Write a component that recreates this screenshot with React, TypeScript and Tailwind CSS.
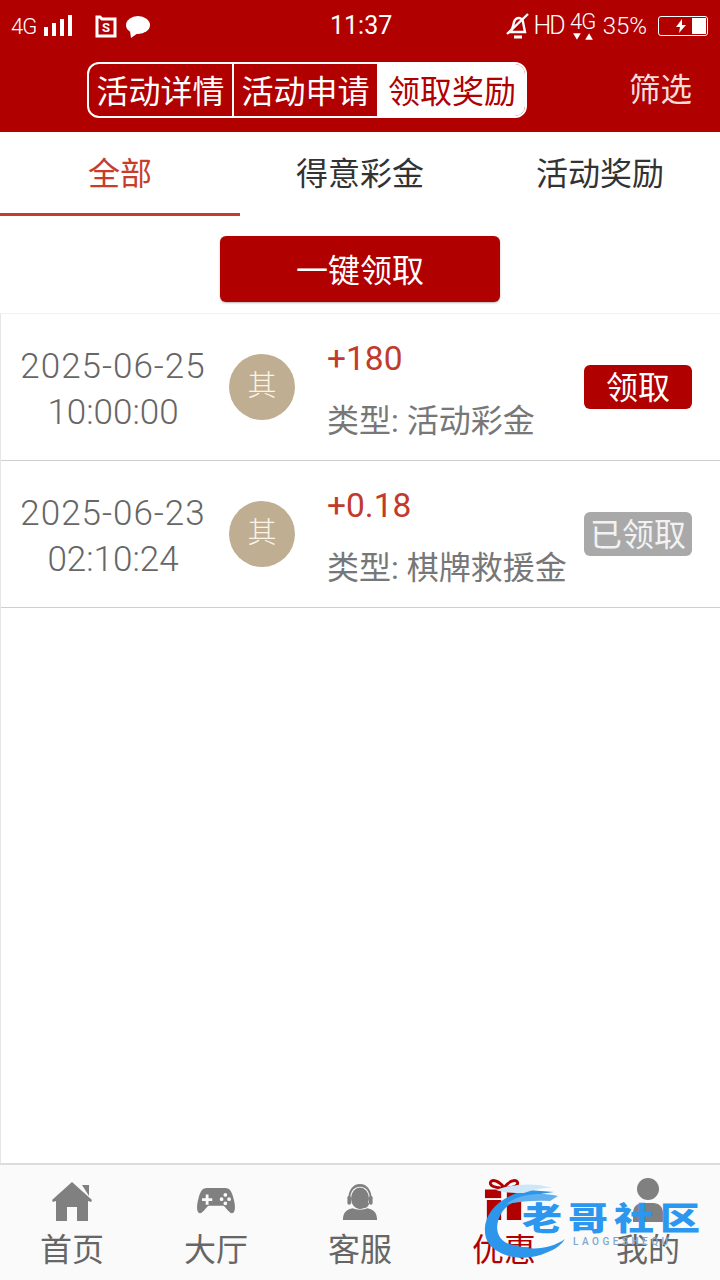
const records = [
  { date: '2025-06-25', time: '10:00:00', amount: '+180', type: '类型: 活动彩金', claimed: false },
  { date: '2025-06-23', time: '02:10:24', amount: '+0.18', type: '类型: 棋牌救援金', claimed: true },
]

function StatusBar() {
  return (
    <div className="relative flex h-[52px] items-center justify-between pl-[11px] pr-[12px] text-white">
      <div className="flex items-center">
        <span className="text-[22px] font-light tracking-[-1px]">4G</span>
        <svg width="30" height="24" viewBox="0 0 30 24" className="ml-[7px]" fill="#fff">
          <rect x="1" y="13" width="4" height="9" />
          <rect x="9" y="9" width="4" height="13" />
          <rect x="17" y="5" width="4" height="17" />
          <rect x="25" y="1" width="4" height="21" />
        </svg>
        <svg width="22" height="24" viewBox="0 0 22 24" className="ml-[22px]">
          <path d="M2 3h3l2 2h13v17H2z" fill="none" stroke="#fff" strokeWidth="3" />
          <text x="11" y="18" fontSize="13" fontWeight="700" textAnchor="middle" fill="#fff">S</text>
        </svg>
        <svg width="26" height="24" viewBox="0 0 26 24" className="ml-[8px]" fill="#fff">
          <ellipse cx="13" cy="11" rx="12" ry="9" />
          <path d="M5 17l1 7 7-5z" />
        </svg>
      </div>
      <span className="absolute left-[330px] text-[25px]">11:37</span>
      <div className="flex items-center">
        <svg width="26" height="28" viewBox="0 0 26 28" fill="none" stroke="#fff" strokeWidth="2.4">
          <path d="M5 20c3-3 3-6 4-10 1-3 3-4 5-4s4 2 4 4l2 10z" />
          <path d="M2 22L23 2" />
          <path d="M9 25h8" strokeWidth="3" />
        </svg>
        <span className="ml-[3px] text-[25px] font-light tracking-[-2px]">HD</span>
        <div className="ml-[6px] flex w-[26px] flex-col items-center leading-none">
          <span className="text-[22px] font-light leading-[20px] tracking-[-1px]">4G</span>
          <svg width="22" height="9" viewBox="0 0 20 8" fill="#fff">
            <path d="M1 1h7L4.500 7zM12 7h7l-3.500-6z" />
          </svg>
        </div>
        <span className="ml-[7px] text-[24px] font-light">35%</span>
        <div className="ml-[11px] flex h-[20px] w-[50px] items-center justify-end rounded-[3px] border border-white pr-px">
          <svg width="12" height="14" viewBox="0 0 12 14" fill="#fff" className="mr-[5px]">
            <path d="M7 0L1 8h4l-1 6 7-8H7z" />
          </svg>
          <div className="h-[16px] w-[14px] bg-white" />
        </div>
      </div>
    </div>
  )
}

function Header() {
  return (
    <div className="flex h-[80px] items-start pt-[10px]">
      <div className="ml-[87px] flex h-[56px] w-[440px] overflow-hidden rounded-[12px] border-2 border-white text-[32px] font-normal leading-[56px]">
        <span className="w-[145px] border-r-2 border-white text-center text-white">活动详情</span>
        <span className="w-[145px] border-r-2 border-white text-center text-white">活动申请</span>
        <span className="flex-1 bg-white text-center text-[#b00000]">领取奖励</span>
      </div>
      <span className="ml-[102px] text-[31.500px] font-normal leading-[58px] text-[#f5dcdc]">筛选</span>
    </div>
  )
}

function Tabs() {
  return (
    <div className="flex h-[84px] text-[32px] font-normal">
      <div className="flex w-[240px] items-center justify-center border-b-[3px] border-[#c83c2c] pt-[3px] text-[#c83c2c]">全部</div>
      <div className="flex w-[240px] items-center justify-center text-[#333]">得意彩金</div>
      <div className="flex w-[240px] items-center justify-center text-[#333]">活动奖励</div>
    </div>
  )
}

function Row({ date, time, amount, type, claimed }: (typeof records)[number]) {
  return (
    <div className="flex h-[147px] items-center border-b border-[#cfcfcf]">
      <div className="w-[224px] pt-[6px] text-center text-[35px] font-light leading-[46px] text-[#666]">
        <div className="tracking-[1px]">{date}</div>
        <div>{time}</div>
      </div>
      <div className="ml-[4px] flex h-[66px] w-[66px] items-center justify-center rounded-full bg-[#bfae92] text-[29px] font-light text-[#fbf4e6]">其</div>
      <div className="ml-[32px] w-[257px] pt-[7px]">
        <div className="text-[33.500px] leading-[44px] text-[#c23a2c]">{amount}</div>
        <div className="mt-[17px] text-[32px] font-normal leading-[46px] text-[#777]">{type}</div>
      </div>
      <div className={`flex h-[44px] w-[108px] items-center justify-center rounded-[6px] pt-[2px] text-[32px] font-normal ${claimed ? 'bg-[#a9a9a9] text-[#f2f2f2]' : 'bg-[#b10000] text-white'}`}>
        {claimed ? '已领取' : '领取'}
      </div>
    </div>
  )
}

function House() {
  return (
    <svg width="42" height="40" viewBox="0 0 42 40" fill="#808080">
      <path d="M31 3h7v11z" />
      <path fillRule="evenodd" d="M21 0L41 18l-1 2-3-1v20H26V25H16v14H5V19l-3 1-1-2z" />
    </svg>
  )
}

function Gamepad() {
  return (
    <svg width="42" height="28" viewBox="0 0 42 30" fill="#808080" className="mb-[7px]">
      <path fillRule="evenodd" d="M11 1h20c5 0 7 4 9 12 2 7 2 15-2 15-3 0-6-6-9-8H13c-3 2-6 8-9 8-4 0-4-8-2-15C4 5 6 1 11 1zM10 8v4H6v3h4v4h3v-4h4v-3h-4V8zM31 6.500a2 2 0 100 4 2 2 0 000-4zM27 11a2 2 0 100 4 2 2 0 000-4zM35 11a2 2 0 100 4 2 2 0 000-4zM31 15.500a2 2 0 100 4 2 2 0 000-4z" />
    </svg>
  )
}

function Agent() {
  return (
    <svg width="36" height="40" viewBox="0 0 40 42" fill="#808080">
      <path d="M7 18C7 8 12 1 20 1s13 7 13 17h-2C31 10 27 4 20 4S9 10 9 18z" />
      <rect x="6" y="14" width="4" height="10" rx="2" />
      <rect x="30" y="14" width="4" height="10" rx="2" />
      <ellipse cx="20" cy="17" rx="10" ry="12" />
      <path d="M30 22c0 4-3 6-8 6v-2c4 0 6-1 6-4z" />
      <path d="M1 41c0-8 4-12 11-13 3 2 13 2 16 0 7 1 11 5 11 13z" />
    </svg>
  )
}

function Gift() {
  return (
    <svg width="40" height="44" viewBox="0 0 42 44" fill="#b10000">
      <path d="M21 9C16 2 9 0 7 3c-2 4 5 7 14 6zm0 0c5-7 12-9 14-6 2 4-5 7-14 6z" fill="none" stroke="#b10000" strokeWidth="3" />
      <rect x="1" y="11" width="17" height="9" />
      <rect x="24" y="11" width="17" height="9" />
      <rect x="3" y="22" width="15" height="21" />
      <rect x="24" y="22" width="15" height="21" />
    </svg>
  )
}

function Person() {
  return (
    <svg width="36" height="44" viewBox="0 0 36 44" fill="#808080">
      <circle cx="18" cy="11" r="11" />
      <path d="M3 44V35c0-6 4-10 10-10h10c6 0 10 4 10 10v9z" />
    </svg>
  )
}

function TabItem({ label, active, icon }: { label: string; active?: boolean; icon: React.ReactNode }) {
  return (
    <div className="flex w-[144px] flex-col items-center">
      <div className="flex h-[42px] items-end justify-center">{icon}</div>
      <span className={`mt-[6px] text-[32px] font-normal leading-[44px] ${active ? 'text-[#b10000]' : 'text-[#666]'}`}>{label}</span>
    </div>
  )
}

function Watermark() {
  return (
    <div className="absolute left-[482px] top-[1182px] h-[80px] w-[225px]">
      <svg width="125" height="84" viewBox="0 0 125 84" className="absolute left-0 top-0">
        <path d="M46 8C16 14 -2 34 4 56c6 18 38 26 62 14 8-3 14-8 17-13-14 10-34 12-50 6C16 62 10 46 20 30 27 20 40 14 72 10z" fill="#2d95ea" />
        <path d="M14 8c16-6 38-8 56-2-12 0-20 2-28 5-10 0-20 0-28-3z" fill="#cfe6f8" />
        <path d="M24 22c14-10 32-12 52-8l-8 5c-14-1-28 0-44 3z" fill="#5fb0ee" />
      </svg>
      <span className="absolute left-[40px] top-[16px] scale-y-[0.8] whitespace-nowrap text-[40px] font-black leading-[44px] tracking-[6px] text-[#2c97ee]">老哥社区</span>
      <span className="absolute left-[91px] top-[53px] whitespace-nowrap text-[10px] font-medium leading-[14px] tracking-[3.500px] text-[#7fa8cc]">LAOGESHEQU</span>
    </div>
  )
}

export default function App() {
  return (
    <div className="relative flex h-[1280px] w-[720px] flex-col overflow-hidden bg-white font-['Roboto','Noto_Sans_CJK_SC',sans-serif]">
      <div className="bg-[#b10000]">
        <StatusBar />
        <Header />
      </div>
      <Tabs />
      <div className="flex h-[98px] justify-center border-b border-[#f0f0f0] pt-[20px]">
        <div className="flex h-[66px] w-[280px] items-center justify-center rounded-[6px] bg-[#b10000] pt-[3px] text-[32px] font-normal text-white shadow-[0_1px_2px_rgba(0,0,0,0.3)]">一键领取</div>
      </div>
      <div className="flex flex-1 flex-col border-l border-[#e6e6e6]">
        {records.map((r) => (
          <Row key={r.date} {...r} />
        ))}
      </div>
      <div className="flex h-[117px] border-t-2 border-[#dcdcdc] bg-[#fafafa] pt-[15px]">
        <TabItem label="首页" icon={<House />} />
        <TabItem label="大厅" icon={<Gamepad />} />
        <TabItem label="客服" icon={<Agent />} />
        <TabItem label="优惠" active icon={<Gift />} />
        <TabItem label="我的" icon={<Person />} />
      </div>
      <Watermark />
    </div>
  )
}
